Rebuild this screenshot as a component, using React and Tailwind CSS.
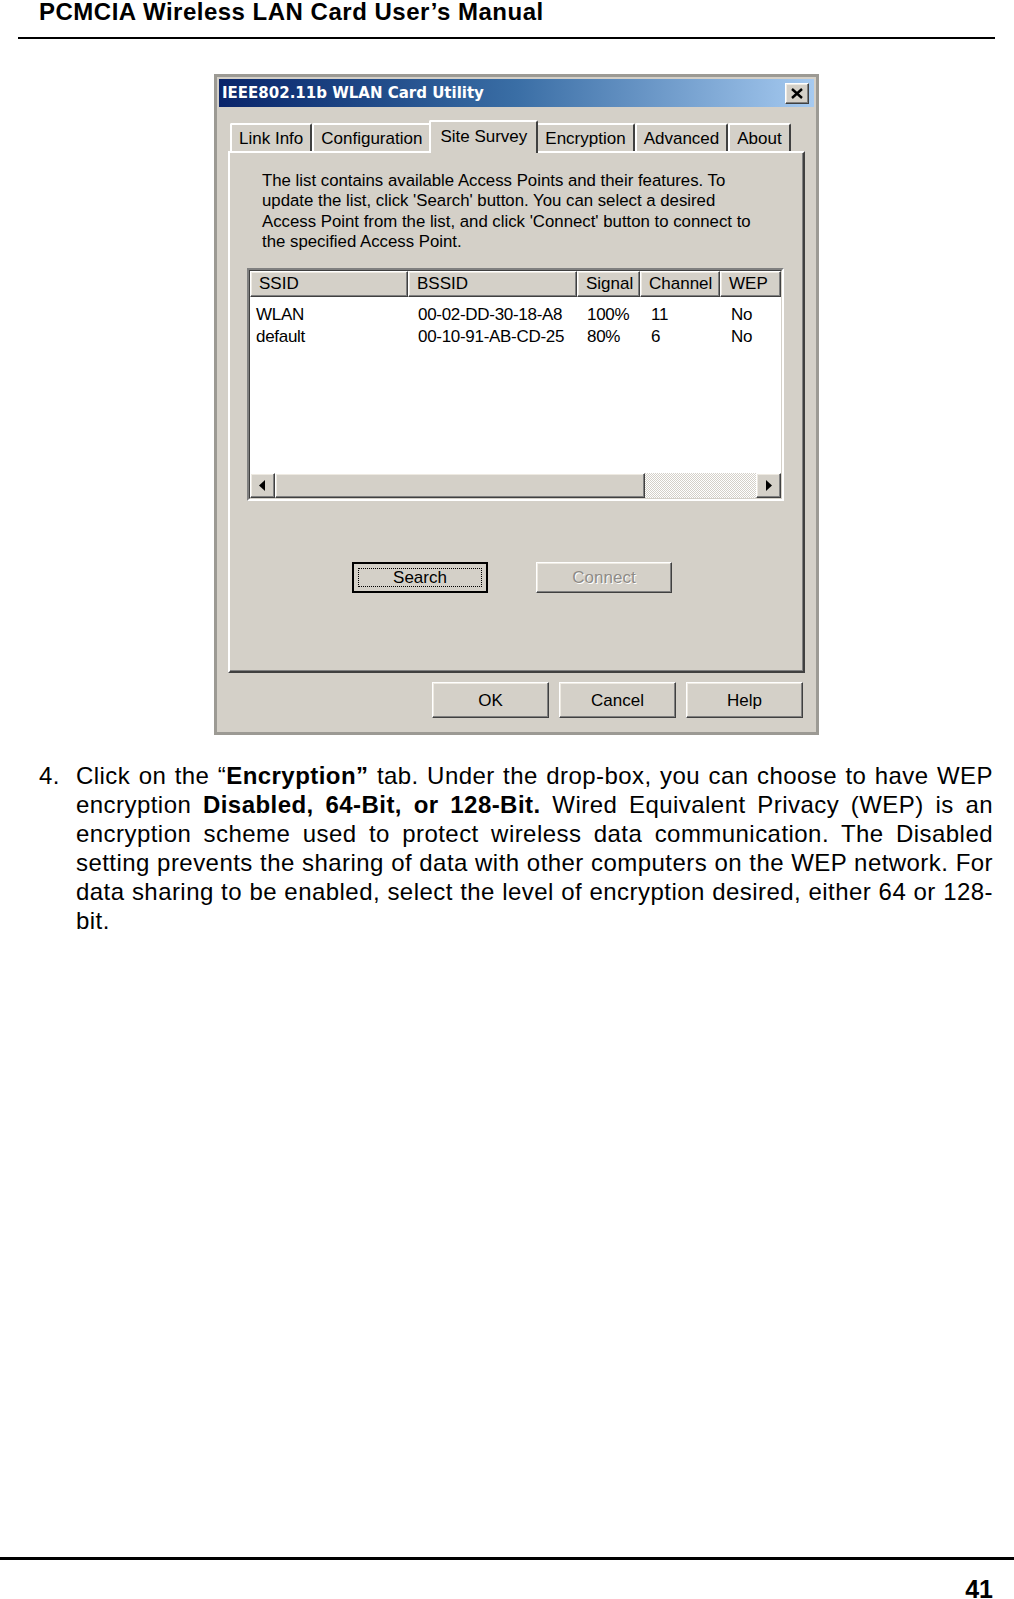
import React from 'react';

const raised =
  'border border-t-white border-l-white border-r-[#404040] border-b-[#404040] shadow-[inset_-1px_-1px_0_#808080,inset_1px_1px_0_#eeeae2]';

const WinButton = ({ children, className = '', disabled = false, focused = false }) => (
  <div
    className={`flex items-center justify-center bg-[#d4d0c8] ${
      focused ? 'border-2 border-black' : raised
    } ${className}`}
  >
    {focused ? (
      <div className="flex items-center justify-center w-[calc(100%-8px)] h-[calc(100%-8px)] border border-dotted border-black">
        {children}
      </div>
    ) : (
      <span className={disabled ? 'text-[#8e8b86] [text-shadow:1px_1px_0_#fff]' : ''}>{children}</span>
    )}
  </div>
);

const tabs = ['Link Info', 'Configuration', 'Site Survey', 'Encryption', 'Advanced', 'About'];

const rows = [
  { ssid: 'WLAN', bssid: '00-02-DD-30-18-A8', signal: '100%', channel: '11', wep: 'No' },
  { ssid: 'default', bssid: '00-10-91-AB-CD-25', signal: '80%', channel: '6', wep: 'No' },
];

const Dialog = () => (
  <div className="w-[605px] h-[661px] bg-[#d4d0c8] border-[3px] border-[#9c9a94] flex flex-col text-[17px] text-black font-['Liberation_Sans',sans-serif] leading-none">
    {/* title bar */}
    <div className="mx-[2px] mt-[2px] h-[28px] flex items-center justify-between pl-[3px] pr-[5px] bg-gradient-to-r from-[#0a246a] via-[#3a6ea5] to-[#a6caf0]">
      <span className="text-white font-bold text-[15px] font-['DejaVu_Sans',sans-serif]">
        IEEE802.11b WLAN Card Utility
      </span>
      <div className={`w-[24px] h-[21px] bg-[#d4d0c8] flex items-center justify-center ${raised}`}>
        <svg width="12" height="11" viewBox="0 0 12 11">
          <path d="M1 1 L11 10 M11 1 L1 10" stroke="#000" strokeWidth="2.4" />
        </svg>
      </div>
    </div>

    {/* tabs */}
    <div className="flex items-end ml-[13px] mt-[14px] h-[30px]">
      {tabs.map((t) =>
        t === 'Site Survey' ? (
          <div
            key={t}
            className="h-[33px] -mx-[2px] px-[9px] pt-[6px] flex items-start bg-[#d4d0c8] border-t-2 border-l-2 border-t-white border-l-white border-r-2 border-r-[#404040] rounded-t-[2px] relative z-10 mb-[-2px] pb-[2px]"
          >
            {t}
          </div>
        ) : (
          <div
            key={t}
            className="h-[28px] px-[7px] flex items-center border-t-2 border-l-2 border-t-white border-l-white border-r-2 border-r-[#404040] rounded-t-[2px]"
          >
            {t}
          </div>
        )
      )}
    </div>

    {/* tab panel */}
    <div className="ml-[11px] w-[577px] h-[522px] border-2 border-t-white border-l-white border-r-[#404040] border-b-[#404040] shadow-[inset_-1px_-1px_0_#808080] flex flex-col">
      <p className="mt-[18px] ml-[32px] w-[520px] text-[16.8px] leading-[20.4px]">
        The list contains available Access Points and their features. To
        <br />
        update the list, click 'Search' button. You can select a desired
        <br />
        Access Point from the list, and click 'Connect' button to connect to
        <br />
        the specified Access Point.
      </p>

      {/* list view */}
      <div className="mt-[15px] ml-[17px] w-[537px] h-[233px] border-2 border-t-[#808080] border-l-[#808080] border-r-white border-b-white">
        <div className="w-full h-full border border-t-[#404040] border-l-[#404040] border-r-[#d4d0c8] border-b-[#d4d0c8] bg-white flex flex-col">
          <div className="flex h-[26px] text-[17px]">
            {[
              ['SSID', 'w-[158px]'],
              ['BSSID', 'w-[169px]'],
              ['Signal', 'w-[63px]'],
              ['Channel', 'w-[80px]'],
              ['WEP', 'flex-1'],
            ].map(([h, w]) => (
              <div key={h} className={`${w} ${raised} bg-[#d4d0c8] flex items-center pl-[8px]`}>
                {h}
              </div>
            ))}
          </div>
          <div className="flex-1 pt-[9px] flex flex-col gap-[5px] text-[17px] tracking-[-0.3px]">
            {rows.map((r) => (
              <div key={r.ssid} className="flex h-[17px] items-center">
                <span className="w-[162px] pl-[6px]">{r.ssid}</span>
                <span className="w-[169px] pl-[6px]">{r.bssid}</span>
                <span className="w-[64px] pl-[6px]">{r.signal}</span>
                <span className="w-[80px] pl-[6px]">{r.channel}</span>
                <span className="pl-[6px]">{r.wep}</span>
              </div>
            ))}
          </div>
          {/* horizontal scrollbar */}
          <div className="flex h-[25px]">
            <div className={`w-[25px] h-full bg-[#d4d0c8] flex items-center justify-center ${raised}`}>
              <svg width="7" height="11" viewBox="0 0 7 11">
                <path d="M6 0 L0 5.5 L6 11 Z" fill="#000" />
              </svg>
            </div>
            <div className={`w-[370px] h-full bg-[#d4d0c8] ${raised}`} />
            <div className="flex-1 h-full bg-[image:repeating-conic-gradient(#ffffff_0_25%,#d4d0c8_0_50%)] bg-[length:2px_2px]" />
            <div className={`w-[25px] h-full bg-[#d4d0c8] flex items-center justify-center ${raised}`}>
              <svg width="7" height="11" viewBox="0 0 7 11">
                <path d="M1 0 L7 5.5 L1 11 Z" fill="#000" />
              </svg>
            </div>
          </div>
        </div>
      </div>

      {/* action buttons */}
      <div className="flex mt-[61px] ml-[122px] gap-[48px]">
        <WinButton focused className="w-[136px] h-[31px]">
          Search
        </WinButton>
        <WinButton disabled className="w-[136px] h-[31px]">
          Connect
        </WinButton>
      </div>
    </div>

    {/* dialog buttons */}
    <div className="flex ml-[215px] mt-[9px] gap-[10px]">
      <WinButton className="w-[117px] h-[36px]">OK</WinButton>
      <WinButton className="w-[117px] h-[36px]">Cancel</WinButton>
      <WinButton className="w-[117px] h-[36px]">Help</WinButton>
    </div>
  </div>
);

export default function App() {
  return (
    <div className="w-[1014px] h-[1599px] bg-white flex flex-col font-['Liberation_Sans',Arial,sans-serif] text-black">
      {/* running header */}
      <header className="pl-[39px] h-[24px] text-[24px] font-bold leading-[24px] tracking-[0.5px]">
        PCMCIA Wireless LAN Card User’s Manual
      </header>
      <div className="ml-[18px] w-[977px] h-[2px] bg-black mt-[13px]" />

      {/* screenshot */}
      <div className="ml-[214px] mt-[35px]">
        <Dialog />
      </div>

      {/* step text */}
      <div className="flex mt-[26px] pl-[39px] pr-[21px] text-[24px] leading-[29px] tracking-[0.45px]">
        <span className="w-[37px] shrink-0">4.</span>
        <p className="text-justify">
          Click on the “<b>Encryption”</b> tab. Under the drop-box, you can choose to have WEP encryption{' '}
          <b>Disabled, 64-Bit, or 128-Bit.</b> Wired Equivalent Privacy (WEP) is an encryption scheme used to
          protect wireless data communication. The Disabled setting prevents the sharing of data with other
          computers on the WEP network. For data sharing to be enabled, select the level of encryption desired,
          either 64 or 128-bit.
        </p>
      </div>

      {/* footer */}
      <div className="mt-auto">
        <div className="w-full h-[3px] bg-black" />
        <div className="flex justify-end pr-[21px] pt-[19px] text-[25px] font-bold leading-[20px]">41</div>
      </div>
    </div>
  );
}
